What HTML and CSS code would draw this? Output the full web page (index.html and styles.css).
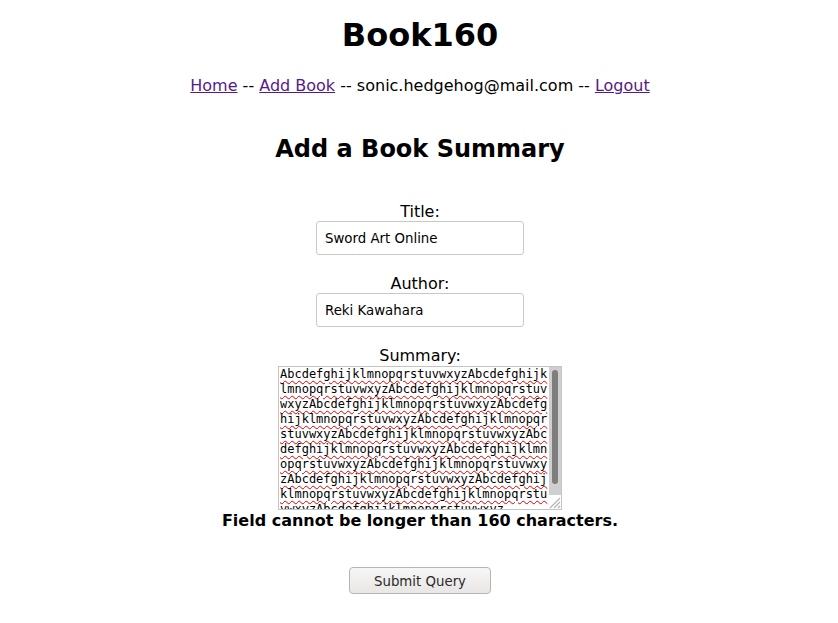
FILE: index.html
```html
<!DOCTYPE html>
<html>
<head>
<meta charset="utf-8">
<title>Book160</title>
<link rel="stylesheet" href="styles.css">
</head>
<body>
<h1 class="title">Book160</h1>
<nav class="nav"><a href="#">Home</a> -- <a href="#">Add Book</a> -- sonic.hedgehog@mail.com -- <a href="#">Logout</a></nav>
<h2 class="subtitle">Add a Book Summary</h2>
<form class="form">
  <div class="field">
    <label class="label" for="title">Title:</label>
    <input class="input" id="title" type="text" value="Sword Art Online">
  </div>
  <div class="field">
    <label class="label" for="author">Author:</label>
    <input class="input" id="author" type="text" value="Reki Kawahara">
  </div>
  <div class="field">
    <label class="label">Summary:</label>
    <div class="textarea" role="textbox">
      <div class="ta-text">AbcdefghijklmnopqrstuvwxyzAbcdefghijklmnopqrstuvwxyzAbcdefghijklmnopqrstuvwxyzAbcdefghijklmnopqrstuvwxyzAbcdefghijklmnopqrstuvwxyzAbcdefghijklmnopqrstuvwxyzAbcdefghijklmnopqrstuvwxyzAbcdefghijklmnopqrstuvwxyzAbcdefghijklmnopqrstuvwxyzAbcdefghijklmnopqrstuvwxyzAbcdefghijklmnopqrstuvwxyzAbcdefghijklmnopqrstuvwxyzAbcdefghijklmnopqrstuvwxyzAbcdefghijklmnopqrstuvwxyz</div>
      <div class="sb-track"><div class="sb-thumb"></div></div>
      <div class="resizer">
        <svg width="13" height="13" viewBox="0 0 13 13"><path d="M12 2 L2 12 M12 6 L6 12 M12 10 L10 12" stroke="#b4b4b4" stroke-width="1.2" fill="none"/></svg>
      </div>
    </div>
    <div class="error">Field cannot be longer than 160 characters.</div>
  </div>
  <div class="actions"><button class="btn" type="button">Submit Query</button></div>
</form>
</body>
</html>
```
FILE: styles.css
```css
html, body { background: #fff; }
body {
  margin: 0;
  padding: 0 0 0 2px;
  font-family: "DejaVu Sans", sans-serif;
  color: #000;
  text-align: center;
}
.title {
  font-size: 32px;
  font-weight: bold;
  margin: 17px 0 22px;
  line-height: 37px;
}
.nav {
  font-size: 16px;
  line-height: 19px;
}
.nav a { color: #551a8b; text-decoration: underline; }
.subtitle {
  font-size: 24px;
  font-weight: bold;
  margin: 40px 0 39px;
  line-height: 28px;
}
.form {
  display: flex;
  flex-direction: column;
  align-items: center;
}
.field {
  display: flex;
  flex-direction: column;
  align-items: center;
  margin-bottom: 19px;
}
.label {
  font-size: 16px;
  line-height: 19px;
}
.input {
  box-sizing: border-box;
  width: 208px;
  height: 34px;
  border: 1px solid #c8c8c8;
  border-radius: 3px;
  padding: 0 8px;
  font-family: "DejaVu Sans", sans-serif;
  font-size: 13.33px;
  color: #000;
  background: #fff;
  outline: none;
}
.textarea {
  position: relative;
  box-sizing: border-box;
  width: 284px;
  height: 144px;
  margin-top: 1px;
  border: 1px solid #c4c4c4;
  background: #fff;
  overflow: hidden;
  text-align: left;
}
.ta-text {
  width: 270px;
  padding-left: 1px;
  font-family: "DejaVu Sans Mono", monospace;
  font-size: 12px;
  line-height: 15px;
  word-break: break-all;
  color: #000;
  text-decoration: underline wavy #e00000;
  text-decoration-thickness: 1px;
  text-underline-offset: 2px;
}
.sb-track {
  position: absolute;
  top: 0;
  right: 0;
  width: 12px;
  height: 128px;
  background: #cfcfcf;
}
.sb-thumb {
  position: absolute;
  left: 3px;
  top: 3px;
  width: 6px;
  height: 114px;
  border-radius: 3px;
  background: #7e7e7e;
}
.resizer {
  position: absolute;
  right: 0;
  bottom: 0;
  width: 13px;
  height: 13px;
  background: #fff;
}
.resizer svg { display: block; }
.error {
  margin-top: 1px;
  font-size: 16px;
  font-weight: bold;
  line-height: 19px;
}
.actions {
  margin-top: 18px;
}
.btn {
  box-sizing: border-box;
  width: 142px;
  height: 27px;
  border: 1px solid #b5b5b5;
  border-radius: 4px;
  background: linear-gradient(#f6f6f6, #e9e7e4);
  font-family: "DejaVu Sans", sans-serif;
  font-size: 13.33px;
  color: #2b2b2b;
  padding: 2px 0 0;
}
```
